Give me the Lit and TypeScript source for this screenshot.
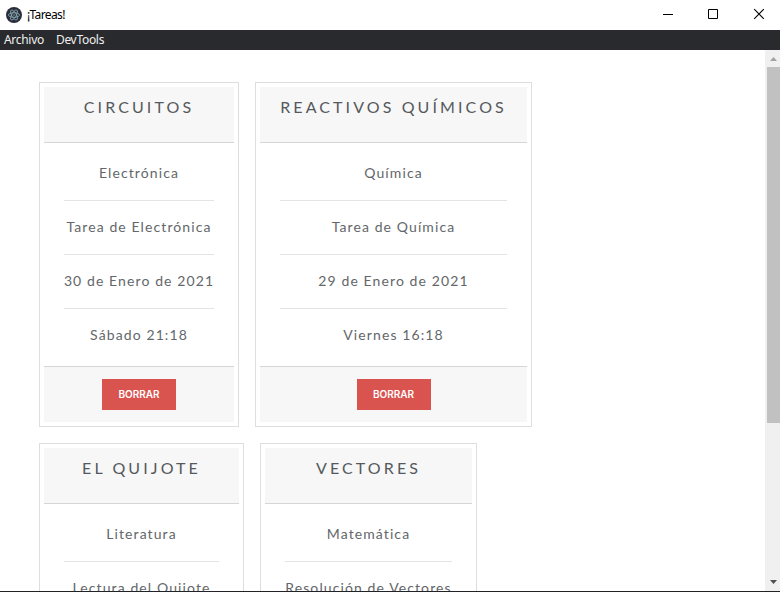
import { LitElement, html, css, svg } from "lit";
import { customElement, property } from "lit/decorators.js";

interface Task {
  title: string;
  width: number;
  details: string[];
}

const tasks: Task[] = [
  { title: "Circuitos", width: 200, details: ["Electrónica", "Tarea de Electrónica", "30 de Enero de 2021", "Sábado 21:18"] },
  { title: "Reactivos Químicos", width: 277, details: ["Química", "Tarea de Química", "29 de Enero de 2021", "Viernes 16:18"] },
  { title: "El Quijote", width: 205, details: ["Literatura", "Lectura del Quijote"] },
  { title: "Vectores", width: 217, details: ["Matemática", "Resolución de Vectores"] },
];

@customElement("task-card")
class TaskCard extends LitElement {
  @property({ attribute: false }) task!: Task;

  static styles = css`
    :host {
      display: flex;
      flex-direction: column;
      flex: none;
      box-sizing: border-box;
      height: 345px;
      padding: 4px;
      border: 1px solid #dedede;
      background: #fff;
      color: #55595c;
      font-family: Lato, "Liberation Sans", sans-serif;
      text-align: center;
      white-space: nowrap;
    }
    .header {
      box-sizing: border-box;
      height: 56px;
      padding-top: 8px;
      border-bottom: 1px solid #d6d6d6;
      background: #f7f7f7;
      font-size: 16px;
      line-height: 24px;
      letter-spacing: 3.1px;
      text-transform: uppercase;
    }
    .body {
      flex: 1;
      padding: 3px 20px 0;
      color: #63676a;
      font-size: 14px;
      letter-spacing: 1.1px;
    }
    .row {
      box-sizing: border-box;
      display: flex;
      justify-content: center;
      height: 54px;
      padding-top: 15px;
      line-height: 24px;
    }
    .row + .row {
      padding-top: 14px;
      border-top: 1px solid #e4e4e4;
    }
    .footer {
      box-sizing: border-box;
      display: flex;
      justify-content: center;
      align-items: flex-start;
      height: 56px;
      padding-top: 12px;
      border-top: 1px solid #d6d6d6;
      background: #f7f7f7;
    }
    button {
      width: 74px;
      height: 31px;
      padding: 0 0 2px;
      border: 0;
      background: #d9534f;
      color: #fff;
      font: 600 10px/14px Inter, sans-serif;
      text-transform: uppercase;
    }
  `;

  render() {
    return html`
      <div class="header">${this.task.title}</div>
      <div class="body">
        ${this.task.details.map((v) => html`<div class="row"><span>${v}</span></div>`)}
      </div>
      <div class="footer"><button>Borrar</button></div>
    `;
  }
}

@customElement("app-root")
class AppRoot extends LitElement {
  static styles = css`
    :host {
      display: flex;
      flex-direction: column;
      box-sizing: border-box;
      height: 592px;
      overflow: hidden;
      background: #fff;
      border-bottom: 1px solid #222327;
      font-family: "Noto Sans", sans-serif;
    }
    svg {
      display: block;
    }
    .titlebar {
      display: flex;
      align-items: center;
      flex: none;
      height: 30px;
      padding-left: 6px;
      background: #fff;
      color: #000;
    }
    .caption {
      flex: 1;
      padding-left: 5px;
      font-size: 12px;
      line-height: 16px;
      letter-spacing: -0.6px;
    }
    .controls {
      display: flex;
    }
    .menubar {
      display: flex;
      flex: none;
      gap: 12px;
      height: 20px;
      padding-left: 4px;
      background: #292a2d;
      color: #f0f0f0;
      font-size: 12px;
      line-height: 20px;
      letter-spacing: -0.3px;
    }
    .view {
      display: flex;
      flex: 1;
      min-height: 0;
    }
    .tasks {
      flex: 1;
      display: flex;
      flex-wrap: wrap;
      align-content: flex-start;
      gap: 16px;
      padding: 32px 200px 0 39px;
      overflow: hidden;
    }
    .scrollbar {
      display: flex;
      flex-direction: column;
      align-items: flex-end;
      flex: none;
      width: 15px;
      background: #f0f0f0;
    }
    .thumb {
      width: 13px;
      height: 356px;
      margin-bottom: auto;
      background: #c1c1c1;
    }
  `;

  private get logo() {
    return svg`<svg width="16" height="16" viewBox="0 0 16 16">
      <circle cx="8" cy="8" r="8" fill="#2b2e3a" />
      <g fill="none" stroke="#8fb3bd" stroke-width="0.75">
        <ellipse cx="8" cy="8" rx="5.6" ry="2.3" />
        <ellipse cx="8" cy="8" rx="5.6" ry="2.3" transform="rotate(60 8 8)" />
        <ellipse cx="8" cy="8" rx="5.6" ry="2.3" transform="rotate(120 8 8)" />
      </g>
      <circle cx="8" cy="8" r="0.7" fill="#8fb3bd" />
    </svg>`;
  }

  render() {
    return html`
      <div class="titlebar">
        ${this.logo}
        <div class="caption">¡Tareas!</div>
        <div class="controls">
          <svg width="45" height="30"><path d="M18 14.5H28" stroke="#000" /></svg>
          <svg width="45" height="30"><path d="M18.5 9.5H27.5V18.5H18.5Z" fill="none" stroke="#000" /></svg>
          <svg width="45" height="30"><path d="M19.2 9.2L28.8 18.8M28.8 9.2L19.2 18.8" fill="none" stroke="#000" stroke-width="1.1" /></svg>
        </div>
      </div>
      <div class="menubar"><span>Archivo</span><span>DevTools</span></div>
      <div class="view">
        <div class="tasks">
          ${tasks.map((t) => html`<task-card .task=${t} style="width:${t.width}px"></task-card>`)}
        </div>
        <div class="scrollbar">
          <svg width="15" height="17"><path d="M5 11L8.5 7L12 11Z" fill="#a3a3a3" /></svg>
          <div class="thumb"></div>
          <svg width="15" height="17"><path d="M5 6L8.5 10L12 6Z" fill="#505050" /></svg>
        </div>
      </div>
    `;
  }
}
